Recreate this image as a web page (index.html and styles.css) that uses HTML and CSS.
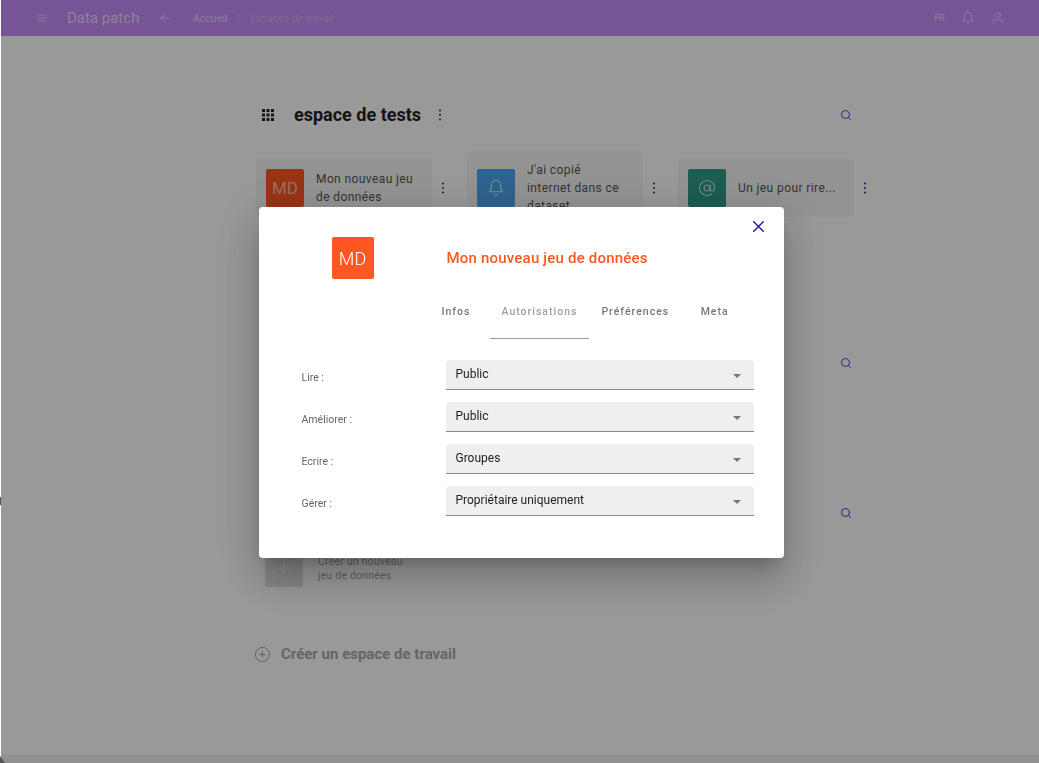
FILE: index.html
```html
<!DOCTYPE html>
<html lang="fr">
<head>
  <meta charset="UTF-8" />
  <meta name="viewport" content="width=device-width, initial-scale=1.0" />
  <title>Data patch</title>
  <link rel="stylesheet" href="styles.css">
</head>
<body>

  <svg class="sprites" width="0" height="0">
    <symbol id="i-menu" viewBox="0 0 24 24"><path d="M3 6h18M3 12h18M3 18h18"/></symbol>
    <symbol id="i-back" viewBox="0 0 24 24"><path d="M19 12H5M12 19l-7-7 7-7"/></symbol>
    <symbol id="i-bell" viewBox="0 0 24 24"><path d="M18 8A6 6 0 0 0 6 8c0 7-3 9-3 9h18s-3-2-3-9"/><path d="M13.73 21a2 2 0 0 1-3.46 0"/></symbol>
    <symbol id="i-user" viewBox="0 0 24 24"><path d="M20 21v-2a4 4 0 0 0-4-4H8a4 4 0 0 0-4 4v2"/><circle cx="12" cy="7" r="4"/></symbol>
    <symbol id="i-search" viewBox="0 0 24 24"><circle cx="11" cy="11" r="8"/><path d="M21 21l-4.35-4.35"/></symbol>
    <symbol id="i-at" viewBox="0 0 24 24"><circle cx="12" cy="12" r="4"/><path d="M16 8v5a3 3 0 0 0 6 0v-1a10 10 0 1 0-3.92 7.94"/></symbol>
    <symbol id="i-plus" viewBox="0 0 24 24"><path d="M12 5v14M5 12h14"/></symbol>
    <symbol id="i-plus-circle" viewBox="0 0 24 24"><circle cx="12" cy="12" r="10"/><path d="M12 8v8M8 12h8"/></symbol>
    <symbol id="i-close" viewBox="0 0 24 24"><path d="M18 6L6 18M6 6l12 12"/></symbol>
    <symbol id="i-dots" viewBox="0 0 12 12"><circle cx="6" cy="1.5" r="1"/><circle cx="6" cy="6" r="1"/><circle cx="6" cy="10.5" r="1"/></symbol>
    <symbol id="i-grid" viewBox="0 0 12 12"><path d="M0 0h3v3H0zM4.5 0h3v3h-3zM9 0h3v3H9zM0 4.5h3v3H0zM4.5 4.5h3v3h-3zM9 4.5h3v3H9zM0 9h3v3H0zM4.5 9h3v3h-3zM9 9h3v3H9z"/></symbol>
  </svg>

  <header class="topbar">
    <svg class="icon icon-menu"><use href="#i-menu"/></svg>
    <span class="brand">Data patch</span>
    <svg class="icon icon-back"><use href="#i-back"/></svg>
    <nav class="crumbs">
      <span>Accueil</span>
      <span class="crumb-sep">/</span>
      <span class="crumb-current">Espaces de travail</span>
    </nav>
    <div class="topbar-right">
      <span class="lang">FR</span>
      <svg class="icon icon-top"><use href="#i-bell"/></svg>
      <svg class="icon icon-top"><use href="#i-user"/></svg>
    </div>
  </header>

  <main class="content">
    <section class="workspace">
      <div class="workspace-head">
        <svg class="grid-icon"><use href="#i-grid"/></svg>
        <h2>espace de tests</h2>
        <svg class="dots"><use href="#i-dots"/></svg>
        <svg class="icon search"><use href="#i-search"/></svg>
      </div>
      <div class="cards">
        <div class="card-wrap">
          <div class="card">
            <div class="tile tile-orange">MD</div>
            <p>Mon nouveau jeu de données</p>
          </div>
          <svg class="dots"><use href="#i-dots"/></svg>
        </div>
        <div class="card-wrap">
          <div class="card">
            <div class="tile tile-blue"><svg class="icon tile-icon"><use href="#i-bell"/></svg></div>
            <p>J'ai copié internet dans ce dataset</p>
          </div>
          <svg class="dots"><use href="#i-dots"/></svg>
        </div>
        <div class="card-wrap">
          <div class="card">
            <div class="tile tile-teal"><svg class="icon tile-icon"><use href="#i-at"/></svg></div>
            <p>Un jeu pour rire...</p>
          </div>
          <svg class="dots"><use href="#i-dots"/></svg>
        </div>
      </div>
    </section>

    <section class="workspace">
      <div class="workspace-head">
        <svg class="icon search"><use href="#i-search"/></svg>
      </div>
    </section>

    <section class="workspace workspace-last">
      <div class="workspace-head">
        <svg class="icon search"><use href="#i-search"/></svg>
      </div>
      <div class="new-set">
        <div class="tile tile-grey"><svg class="icon new-plus"><use href="#i-plus"/></svg></div>
        <p>Créer un nouveau<br>jeu de données</p>
      </div>
    </section>

    <div class="new-workspace">
      <svg class="icon new-ws-icon"><use href="#i-plus-circle"/></svg>
      <span>Créer un espace de travail</span>
    </div>
  </main>

  <div class="overlay">
    <div class="modal">
      <button class="close"><svg class="icon"><use href="#i-close"/></svg></button>

      <div class="modal-head">
        <div class="modal-side"><div class="tile tile-big">MD</div></div>
        <h3>Mon nouveau jeu de données</h3>
      </div>

      <div class="tabs">
        <span class="tab">Infos</span>
        <span class="tab tab-active">Autorisations</span>
        <span class="tab">Préférences</span>
        <span class="tab">Meta</span>
      </div>

      <div class="form">
        <div class="form-row">
          <label>Lire :</label>
          <div class="select"><span>Public</span><i class="caret"></i></div>
        </div>
        <div class="form-row">
          <label>Améliorer :</label>
          <div class="select"><span>Public</span><i class="caret"></i></div>
        </div>
        <div class="form-row">
          <label>Ecrire :</label>
          <div class="select"><span>Groupes</span><i class="caret"></i></div>
        </div>
        <div class="form-row">
          <label>Gérer :</label>
          <div class="select"><span>Propriétaire uniquement</span><i class="caret"></i></div>
        </div>
      </div>
    </div>
  </div>

  <!-- bords de la fenêtre, visibles sur la capture -->
  <div class="edge-bottom"></div>
  <div class="edge-corner"></div>
  <div class="edge-mark"></div>

</body>
</html>
```

FILE: styles.css
```css
* {
  box-sizing: border-box;
}

html, body {
  height: 100%;
}

body {
  margin: 0;
  background: #fff;
  font-family: Roboto, "Liberation Sans", sans-serif;
  color: #222;
  overflow: hidden;
}

.sprites {
  display: block;
  height: 0;
}

.icon {
  display: block;
  fill: none;
  stroke: currentColor;
  stroke-width: 1.7;
  stroke-linecap: round;
  stroke-linejoin: round;
}

/* top bar */
.topbar {
  height: 36px;
  margin-left: 1px;
  padding: 0 34px 0 35px;
  display: flex;
  align-items: center;
  background: #c68cf8;
  color: rgba(255, 255, 255, .7);
}

.icon-menu {
  width: 12px;
  height: 12px;
  margin-right: 19px;
}

.brand {
  font-size: 15px;
  width: 72px;
  margin-right: 19px;
  white-space: nowrap;
}

.icon-back {
  width: 14px;
  height: 14px;
  margin-right: 21px;
  stroke-width: 1.5;
}

.crumbs {
  display: flex;
  gap: 9px;
  font-size: 10.5px;
  color: rgba(255, 255, 255, .65);
}

.crumb-sep,
.crumb-current {
  color: rgba(255, 255, 255, .32);
}

.topbar-right {
  margin-left: auto;
  display: flex;
  align-items: center;
  gap: 16px;
}

.lang {
  font-size: 9px;
  font-weight: 500;
  color: rgba(255, 255, 255, .55);
}

.icon-top {
  width: 14px;
  height: 14px;
  stroke-width: 1.4;
}

/* page content */
.content {
  width: 600px;
  margin-left: 256px;
  padding-top: 67px;
}

.workspace {
  margin-bottom: 126px;
}

.workspace-last {
  margin-bottom: 57px;
}

.workspace-head {
  height: 24px;
  display: flex;
  align-items: center;
  margin-bottom: 24px;
  padding: 0 4px 0 6px;
}

.grid-icon {
  width: 12px;
  height: 12px;
  margin-right: 20px;
  fill: #222;
}

h2 {
  margin: 0 13px 2px 0;
  font-size: 18px;
  font-weight: 700;
  color: #222;
}

.dots {
  width: 12px;
  height: 12px;
  flex: none;
  fill: #2a1fb0;
}

.search {
  width: 12px;
  height: 12px;
  margin-left: auto;
  color: #2a1fb0;
}

.cards {
  display: flex;
  align-items: center;
  height: 74px;
}

.card-wrap {
  width: 211px;
  flex: none;
  display: flex;
  align-items: center;
}

.card {
  width: 176px;
  padding: 10px;
  display: flex;
  align-items: center;
  gap: 12px;
  background: #f5f5f5;
  border-radius: 4px;
}

.card p {
  max-width: 100px;
  margin: 0;
  font-size: 12px;
  line-height: 18px;
  letter-spacing: .4px;
  color: #555;
}

.card-wrap .dots {
  margin-left: 5px;
}

.tile {
  width: 38px;
  height: 38px;
  flex: none;
  display: flex;
  align-items: center;
  justify-content: center;
  border-radius: 2px;
  color: #fff;
  font-size: 17px;
}

.tile-orange {
  background: #ff5722;
  color: rgba(255, 255, 255, .6);
}

.tile-blue {
  background: #4ca6f0;
}

.tile-teal {
  background: #2f9a88;
}

.tile-grey {
  background: #e0e0e0;
}

.tile-icon {
  width: 18px;
  height: 18px;
  stroke-width: 1.5;
  color: rgba(255, 255, 255, .7);
}

.new-set {
  display: flex;
  align-items: center;
  gap: 15px;
  padding-left: 9px;
}

.new-set p {
  margin: 2px 0 0;
  font-size: 10.5px;
  line-height: 14px;
  letter-spacing: .2px;
  color: #a0a0a0;
}

.new-plus {
  width: 20px;
  height: 20px;
  stroke-width: 1;
}

.new-workspace {
  display: flex;
  align-items: center;
  gap: 10px;
  height: 20px;
  font-size: 15px;
  font-weight: 700;
  color: #a8a8a8;
}

.new-ws-icon {
  width: 17px;
  height: 17px;
  margin-left: -2px;
  stroke-width: 1.4;
  color: #a0a0a0;
}

/* dialog */
.overlay {
  position: fixed;
  inset: 0 0 0 1px;
  display: flex;
  align-items: center;
  justify-content: center;
  padding: 2px 0 0 2px;
  background: rgba(0, 0, 0, .4);
}

.modal {
  position: relative;
  width: 525px;
  height: 351px;
  padding-top: 30px;
  background: #fff;
  border-radius: 4px;
  box-shadow: 0 11px 15px -7px rgba(0, 0, 0, .2), 0 24px 38px 3px rgba(0, 0, 0, .14), 0 9px 46px 8px rgba(0, 0, 0, .12);
}

.close {
  position: absolute;
  top: 10px;
  right: 16px;
  width: 19px;
  height: 19px;
  padding: 0;
  border: 0;
  background: none;
  color: #1e0f9a;
}

.close .icon {
  width: 19px;
  height: 19px;
}

.modal-head {
  display: flex;
  align-items: center;
}

.modal-side {
  width: 187px;
  padding-left: 73px;
}

.tile-big {
  width: 42px;
  height: 42px;
  background: #ff5722;
  font-size: 18px;
  font-weight: 300;
}

h3 {
  margin: 0 0 0 1px;
  font-size: 15px;
  font-weight: 500;
  letter-spacing: .2px;
  color: #ff5722;
}

.tabs {
  display: flex;
  margin: 15px 0 21px 164px;
  height: 45px;
}

.tab {
  min-width: 67px;
  padding: 0 12px 10px;
  display: flex;
  align-items: center;
  justify-content: center;
  font-size: 10.5px;
  font-weight: 500;
  letter-spacing: 1px;
  color: #777;
}

.tab-active {
  color: #a0a0a0;
  border-bottom: 1.5px solid #999;
}

.form {
  display: flex;
  flex-direction: column;
  gap: 12px;
}

.form-row {
  display: flex;
  align-items: center;
}

.form-row label {
  width: 187px;
  padding: 4px 0 0 43px;
  font-size: 10.5px;
  color: #666;
}

.select {
  width: 308px;
  height: 30px;
  padding: 0 13px 2px 10px;
  display: flex;
  align-items: center;
  justify-content: space-between;
  background: #efefef;
  border-bottom: 1px solid #888;
  border-radius: 4px 4px 0 0;
  font-size: 12px;
  color: #222;
}

.caret {
  display: block;
  margin-top: 4px;
  border-top: 4px solid #777;
  border-left: 4px solid transparent;
  border-right: 4px solid transparent;
}

/* window edges */
.edge-bottom {
  position: fixed;
  left: 1px;
  right: 0;
  bottom: 0;
  height: 8px;
  background: rgba(0, 0, 0, .05);
}

.edge-corner {
  position: fixed;
  left: 0;
  bottom: 0;
  width: 5px;
  height: 7px;
  background: linear-gradient(to top right, #555 45%, transparent 55%);
}

.edge-mark {
  position: fixed;
  left: 0;
  top: 497px;
  width: 1px;
  height: 8px;
  background: #555;
}
```
